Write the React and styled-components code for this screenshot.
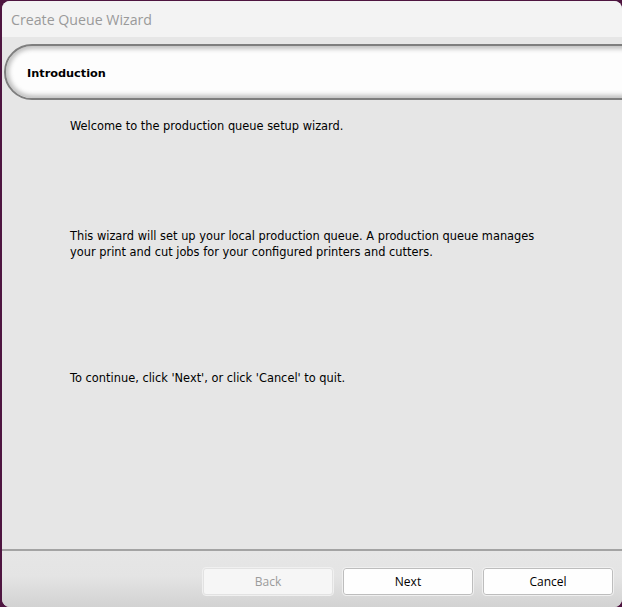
import React from "react";
import styled, {createGlobalStyle} from "styled-components";

const Global = createGlobalStyle`
    html, body {
        margin: 0;
        padding: 0;
        background: #4e1540;
    }
`;

function App() {
    return (
        <>
            <Global />
            <Desktop>
                <Window>
                    <TitleBar>Create Queue Wizard</TitleBar>
                    <HeaderStrip>
                        <StepPill>Introduction</StepPill>
                    </HeaderStrip>
                    <Body>
                        <Para>Welcome to the production queue setup wizard.</Para>
                        <Para $top={94}>
                            This wizard will set up your local production queue. A production queue manages
                            <br />
                            your print and cut jobs for your configured printers and cutters.
                        </Para>
                        <Para $top={110}>To continue, click 'Next', or click 'Cancel' to quit.</Para>
                    </Body>
                    <Footer>
                        <Button disabled>Back</Button>
                        <Button>Next</Button>
                        <Button>Cancel</Button>
                    </Footer>
                </Window>
            </Desktop>
        </>
    );
}

export default App;

const Desktop = styled.div`
    width: 622px;
    height: 607px;
    padding: 1px 0 0 2px;
    box-sizing: border-box;
    overflow: hidden;
    background: #4e1540;
`;

const Window = styled.div`
    width: 620px;
    height: 606px;
    border-radius: 8px;
    overflow: hidden;
    display: flex;
    flex-direction: column;
    background: #e6e6e6;
`;

const TitleBar = styled.div`
    height: 36px;
    flex: none;
    display: flex;
    align-items: center;
    padding-left: 9px;
    background: #f3f3f3;
    color: #9a9a9a;
    font-family: "Open Sans", "Noto Sans", sans-serif;
    font-size: 14.2px;
`;

const HeaderStrip = styled.div`
    flex: none;
    padding: 7px 0 0 2px;
    background: #e6e6e6;
`;

const StepPill = styled.div`
    height: 56px;
    box-sizing: border-box;
    margin-right: -60px;
    border-radius: 28px;
    border: 2px solid #7e7e7e;
    background: #fdfdfd;
    box-shadow: inset 0 0 4px 3px rgba(120, 120, 120, 0.45);
    display: flex;
    align-items: center;
    padding: 2px 0 0 21px;
    font-family: "DejaVu Sans", Verdana, sans-serif;
    font-weight: bold;
    font-size: 11.3px;
    color: #000;
`;

const Body = styled.div`
    flex: 1;
    padding: 18px 0 0 68px;
    background: #e6e6e6;
    border-bottom: 2px solid #a3a3a3;
`;

const Para = styled.p`
    margin: ${(p) => (p.$top || 0)}px 0 0 0;
    font-family: "DejaVu Sans", Verdana, sans-serif;
    font-size: 11.4px;
    line-height: 16px;
    color: #000;
`;

const Footer = styled.div`
    height: 56px;
    flex: none;
    box-sizing: border-box;
    display: flex;
    justify-content: flex-end;
    align-items: flex-start;
    gap: 10px;
    padding: 17px 9px 0 0;
    background: linear-gradient(#e6e6e6 0%, #e4e4e4 45%, #d2d2d2 100%);
`;

const Button = styled.button`
    width: 130px;
    height: 27px;
    box-sizing: border-box;
    border: 1px solid ${(p) => (p.disabled ? "#e2e2e2" : "#bdbdbd")};
    outline: 1px solid #f0f0f0;
    border-radius: 3px;
    background: ${(p) => (p.disabled ? "#f6f6f6" : "#fefefe")};
    color: ${(p) => (p.disabled ? "#9b9b9b" : "#000")};
    font-family: "Open Sans", "Noto Sans", sans-serif;
    font-size: 12px;
    padding: 0;
`;
